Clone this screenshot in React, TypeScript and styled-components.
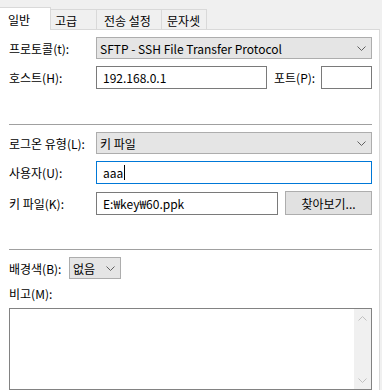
import * as React from 'react';
import styled, { createGlobalStyle } from 'styled-components';

const GlobalStyle = createGlobalStyle`
  html, body {
    margin: 0;
    padding: 0;
    background: #f0f0f0;
  }
  body {
    font-family: "Noto Sans CJK KR", "Noto Sans", sans-serif;
    font-size: 12px;
    color: #000;
  }
  * { box-sizing: border-box; }
`;

const Window = styled.div`
  width: 382px;
  height: 390px;
  overflow: hidden;
  display: flex;
  flex-direction: column;
  background: #f0f0f0;
`;

const TabBar = styled.div`
  height: 29px;
  display: flex;
  align-items: flex-end;
  position: relative;
  z-index: 1;
`;

const Tab = styled.div<{ $active?: boolean; $w: number; $pl: number }>`
  width: ${p => p.$w}px;
  height: ${p => (p.$active ? 23 : 20)}px;
  margin-bottom: ${p => (p.$active ? -1 : 0)}px;
  padding-left: ${p => p.$pl}px;
  padding-top: ${p => (p.$active ? 1 : 2)}px;
  background: ${p => (p.$active ? '#fff' : '#f0f0f0')};
  border-top: 1px solid #d9d9d9;
  border-right: 1px solid #d9d9d9;
  display: flex;
  align-items: center;
  white-space: nowrap;
`;

const Panel = styled.div`
  flex: 1;
  width: 380px;
  background: #fff;
  border-top: 1px solid #d9d9d9;
  border-right: 1px solid #d9d9d9;
  padding: 7px 7px 0 9px;
  display: flex;
  flex-direction: column;
`;

const Group = styled.div`
  display: flex;
  flex-direction: column;
  gap: 7px;
`;

const Row = styled.div`
  display: flex;
  align-items: center;
`;

const Label = styled.div<{ $w?: number }>`
  width: ${p => (p.$w ? `${p.$w}px` : 'auto')};
  flex-shrink: 0;
  white-space: nowrap;
`;

const Select = styled.div<{ $w?: number }>`
  height: 22px;
  ${p => (p.$w ? `width: ${p.$w}px;` : 'flex: 1;')}
  background: #e5e5e5;
  border: 1px solid #adadad;
  padding: 0 5px 0 3px;
  display: flex;
  align-items: center;
  justify-content: space-between;
  white-space: nowrap;
`;

const Input = styled.div<{ $w?: number; $focus?: boolean }>`
  height: 23px;
  ${p => (p.$w ? `width: ${p.$w}px;` : 'flex: 1;')}
  flex-shrink: 0;
  background: #fff;
  border: 1px solid ${p => (p.$focus ? '#0078d7' : '#7a7a7a')};
  padding: 0 6px;
  display: flex;
  align-items: center;
  white-space: nowrap;
`;

const Caret = styled.span`
  display: inline-block;
  width: 1px;
  height: 15px;
  background: #000;
  margin-left: 1px;
`;

const Button = styled.div`
  width: 87px;
  height: 24px;
  margin-left: 7px;
  background: #e1e1e1;
  border: 1px solid #adadad;
  display: flex;
  align-items: center;
  justify-content: center;
  white-space: nowrap;
`;

const Divider = styled.div<{ $mt: number }>`
  height: 1px;
  background: #a0a0a0;
  margin: ${p => p.$mt}px 0 7px;
`;

const MemoLabel = styled.div`
  margin: 7px 0 6px;
  height: 16px;
  line-height: 16px;
`;

const Memo = styled.div`
  height: 82px;
  border: 1px solid #828282;
  display: flex;
  justify-content: flex-end;
`;

const ScrollBar = styled.div`
  width: 17px;
  background: #f0f0f0;
  display: flex;
  flex-direction: column;
  justify-content: space-between;
  align-items: center;
  padding: 7px 0 6px;
`;

const Chevron: React.FC<{ up?: boolean; color?: string }> = ({ up, color = '#606060' }) => (
  <svg width="9" height="5" viewBox="0 0 9 5">
    <polyline
      points={up ? '0.5,4.5 4.5,0.5 8.5,4.5' : '0.5,0.5 4.5,4.5 8.5,0.5'}
      fill="none"
      stroke={color}
      strokeWidth="1"
    />
  </svg>
);

const App: React.FC = () => {
  return (
    <Window>
      <GlobalStyle />
      <TabBar>
        <Tab $active $w={51} $pl={8}>일반</Tab>
        <Tab $w={46} $pl={4}>고급</Tab>
        <Tab $w={65} $pl={7}>전송 설정</Tab>
        <Tab $w={45} $pl={5}>문자셋</Tab>
      </TabBar>
      <Panel>
        <Group>
          <Row>
            <Label $w={87}>프로토콜(t):</Label>
            <Select>
              <span>SFTP - SSH File Transfer Protocol</span>
              <Chevron />
            </Select>
          </Row>
          <Row>
            <Label $w={87}>호스트(H):</Label>
            <Input $w={171}>192.168.0.1</Input>
            <Label style={{ marginLeft: 7, flex: 1 }}>포트(P):</Label>
            <Input $w={51} />
          </Row>
        </Group>
        <Divider $mt={35} />
        <Group>
          <Row>
            <Label $w={87}>로그온 유형(L):</Label>
            <Select>
              <span>키 파일</span>
              <Chevron />
            </Select>
          </Row>
          <Row>
            <Label $w={87}>사용자(U):</Label>
            <Input $focus>
              aaa<Caret />
            </Input>
          </Row>
          <Row>
            <Label $w={87}>키 파일(K):</Label>
            <Input $w={182}>E:₩key₩60.ppk</Input>
            <Button>찾아보기...</Button>
          </Row>
        </Group>
        <Divider $mt={34} />
        <Row>
          <Label $w={60}>배경색(B):</Label>
          <Select $w={52}>
            <span>없음</span>
            <Chevron />
          </Select>
        </Row>
        <MemoLabel>비고(M):</MemoLabel>
        <Memo>
          <ScrollBar>
            <Chevron up color="#c0c0c0" />
            <Chevron color="#c0c0c0" />
          </ScrollBar>
        </Memo>
      </Panel>
    </Window>
  );
};

export default App;
